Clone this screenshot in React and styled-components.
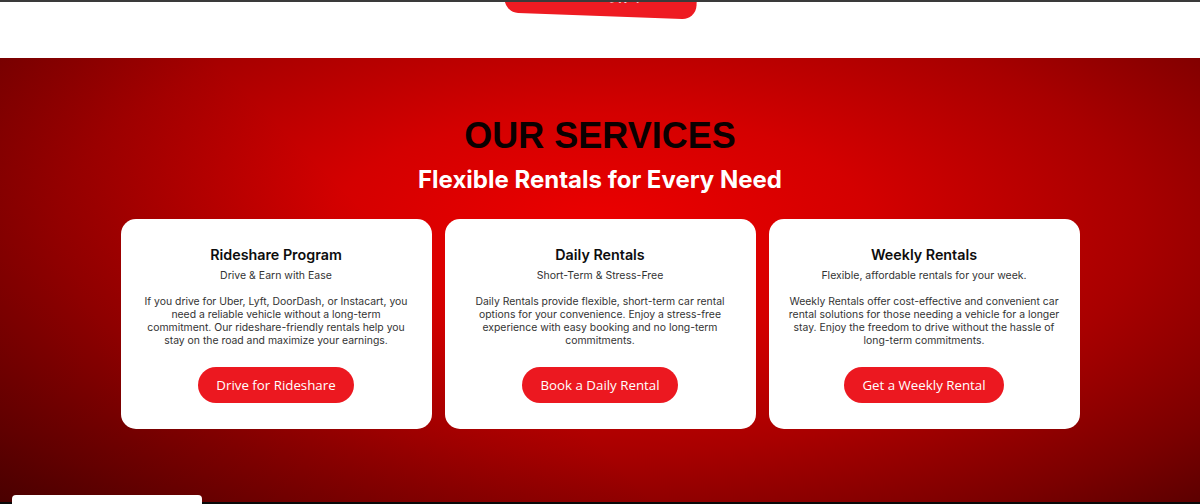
import React from "react";
import styled, { createGlobalStyle } from "styled-components";

const Global = createGlobalStyle`
  html, body { margin: 0; padding: 0; }
  body { font-family: "Open Sans", "Liberation Sans", sans-serif; background: #fff; overflow: hidden; }
`;

const Page = styled.div`
  width: 1200px;
  height: 504px;
  display: flex;
  flex-direction: column;
  position: relative;
  overflow: hidden;
`;

const TopBand = styled.div`
  height: 56px;
  background: #fff;
  border-top: 2px solid #3a3a3a;
  position: relative;
  overflow: hidden;
  display: flex;
  justify-content: center;
`;

const TiltedCta = styled.a`
  position: absolute;
  top: -36px;
  left: 505px;
  width: 192px;
  height: 50px;
  background: #ee1b22;
  border-radius: 0 0 14px 14px;
  transform: rotate(2.1deg);
  color: #fff;
  font-family: "Montserrat", "Open Sans", sans-serif;
  font-weight: 600;
  font-size: 14px;
  display: flex;
  align-items: flex-end;
  justify-content: center;
  padding-bottom: 10px;
  box-sizing: border-box;
  text-decoration: none;
`;

const Services = styled.section`
  flex: 1;
  background:
    linear-gradient(45deg, rgba(40,0,0,0.35) 0%, rgba(40,0,0,0) 40%),
    radial-gradient(ellipse 75% 85% at 50% 38%, #ec0000 0%, #d40000 30%, #a80000 60%, #7a0000 85%, #5a0000 100%);
  display: flex;
  flex-direction: column;
  align-items: center;
  padding-top: 56px;
  box-sizing: border-box;
`;

const Heading = styled.h2`
  margin: 0;
  font-family: "Liberation Sans", "Arial", sans-serif;
  font-weight: 700;
  font-size: 36px;
  line-height: 44px;
  color: #0a0000;
`;

const Sub = styled.h3`
  margin: 7px 0 0;
  font-family: "Inter", "Open Sans", sans-serif;
  font-weight: 700;
  font-size: 24px;
  line-height: 30px;
  color: #fff;
`;

const Cards = styled.div`
  margin-top: 24px;
  display: grid;
  grid-template-columns: repeat(3, 311px);
  gap: 13px;
`;

const Card = styled.div`
  background: #fff;
  border-radius: 15px;
  height: 210px;
  box-sizing: border-box;
  padding: 26px 19px 0;
  display: flex;
  flex-direction: column;
  align-items: center;
  text-align: center;
`;

const CardTitle = styled.h4`
  margin: 0;
  font-family: "Inter", "Open Sans", sans-serif;
  font-weight: 600;
  font-size: 14.3px;
  line-height: 20px;
  color: #0d0d0d;
`;

const CardTag = styled.p`
  margin: 3px 0 0;
  font-family: "Inter", "Open Sans", sans-serif;
  font-size: 10.5px;
  line-height: 16px;
  color: #333;
`;

const CardBody = styled.p`
  margin: 11px 0 0;
  font-family: "Inter", "Open Sans", sans-serif;
  font-size: 10.4px;
  line-height: 13px;
  color: #333;
  height: 52px;
`;

const CardButton = styled.a`
  margin-top: 20px;
  height: 36px;
  padding: 0 18px;
  border-radius: 18px;
  background: #ec1820;
  color: #fff;
  font-family: "Open Sans", "Liberation Sans", sans-serif;
  font-size: 13.3px;
  display: flex;
  align-items: center;
  text-decoration: none;
`;

const Footer = styled.div`
  height: 2px;
  background: #0a0a0a;
  position: relative;
`;

const FloatTab = styled.div`
  position: absolute;
  left: 12px;
  bottom: 0;
  width: 190px;
  height: 9px;
  background: #fff;
  border-radius: 4px 4px 0 0;
`;

const services = [
  {
    title: "Rideshare Program",
    tag: "Drive & Earn with Ease",
    body: "If you drive for Uber, Lyft, DoorDash, or Instacart, you need a reliable vehicle without a long-term commitment. Our rideshare-friendly rentals help you stay on the road and maximize your earnings.",
    cta: "Drive for Rideshare",
  },
  {
    title: "Daily Rentals",
    tag: "Short-Term & Stress-Free",
    body: "Daily Rentals provide flexible, short-term car rental options for your convenience. Enjoy a stress-free experience with easy booking and no long-term commitments.",
    cta: "Book a Daily Rental",
  },
  {
    title: "Weekly Rentals",
    tag: "Flexible, affordable rentals for your week.",
    body: "Weekly Rentals offer cost-effective and convenient car rental solutions for those needing a vehicle for a longer stay. Enjoy the freedom to drive without the hassle of long-term commitments.",
    cta: "Get a Weekly Rental",
  },
];

export default function App() {
  return (
    <Page>
      <Global />
      <TopBand>
        <TiltedCta href="#">Ride Now →</TiltedCta>
      </TopBand>
      <Services>
        <Heading>OUR SERVICES</Heading>
        <Sub>Flexible Rentals for Every Need</Sub>
        <Cards>
          {services.map((s) => (
            <Card key={s.title}>
              <CardTitle>{s.title}</CardTitle>
              <CardTag>{s.tag}</CardTag>
              <CardBody>{s.body}</CardBody>
              <CardButton href="#">{s.cta}</CardButton>
            </Card>
          ))}
        </Cards>
      </Services>
      <Footer />
      <FloatTab />
    </Page>
  );
}
